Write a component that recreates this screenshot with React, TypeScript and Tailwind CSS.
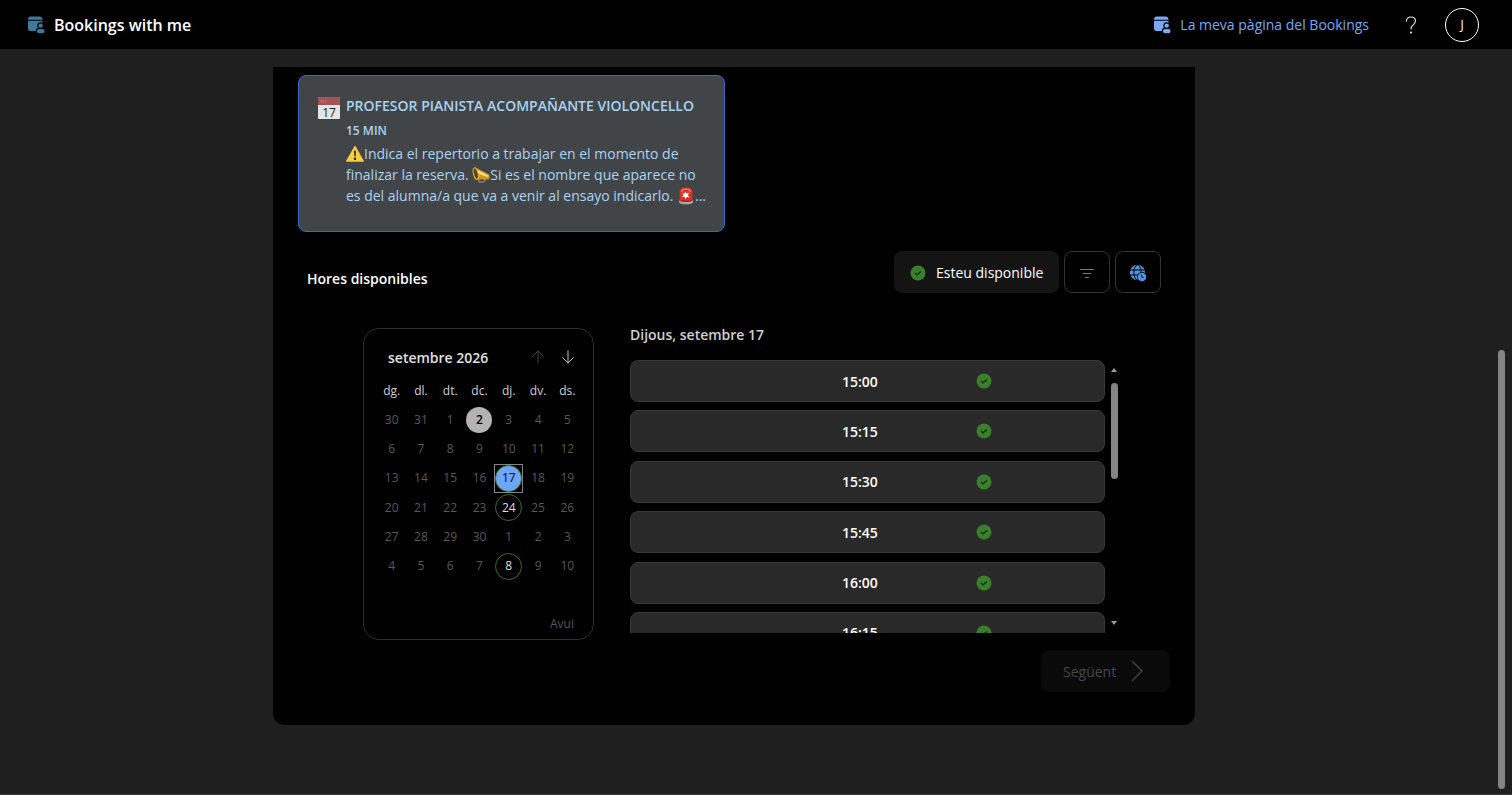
import React from "react";

function BookingsIcon({ className }: { className: string }) {
  return (
    <svg viewBox="0 0 18 18" className={className} fill="currentColor" aria-hidden="true">
      <path d="M1 3.400C1 1.800 2 .5 3.400.5h9.200C14.200.5 15.500 1.800 15.500 3.400v.3H1z" />
      <path d="M1 4.700h14.500V10l-5 5H3.400C1.900 15 1 14 1 12.600z" />
      <circle cx="13.700" cy="9.600" r="2.400" stroke="#000" strokeWidth="2" />
      <rect x="9.800" y="12.800" width="7.900" height="4.700" rx="2.200" stroke="#000" strokeWidth="2" />
      <circle cx="13.700" cy="9.600" r="2.200" />
      <rect x="10" y="13" width="7.500" height="4.300" rx="2" />
    </svg>
  );
}

function CheckBadge({ className }: { className: string }) {
  return (
    <svg viewBox="0 0 16 16" className={className} aria-hidden="true">
      <circle cx="8" cy="8" r="7.500" fill="#3a802a" />
      <path d="M5.400 8.300l1.800 1.600 3.400-3.200" fill="none" stroke="#0d2608" strokeWidth="1.300" strokeLinecap="round" strokeLinejoin="round" />
    </svg>
  );
}

function FilterIcon() {
  return (
    <svg viewBox="0 0 16 12" className="h-3 w-4" fill="none" stroke="#3f86d6" strokeWidth="1.200" strokeLinecap="round" aria-hidden="true">
      <path d="M1.500 2.500h13M4 6.500h8M6.500 10.500h3" />
    </svg>
  );
}

function GlobeClockIcon() {
  return (
    <svg viewBox="0 0 18 18" className="h-[18px] w-[18px]" aria-hidden="true">
      <circle cx="8.500" cy="8.500" r="7.700" fill="#4f93e0" />
      <g fill="none" stroke="#000" strokeWidth="1">
        <ellipse cx="8.500" cy="8.500" rx="3.600" ry="7.700" />
        <path d="M.5 6h16M.5 11h16" />
      </g>
      <circle cx="13" cy="13" r="5" fill="#000" />
      <circle cx="13" cy="13" r="4.300" fill="#4f93e0" />
      <path d="M12.700 10.700v2.500h1.800" fill="none" stroke="#000" strokeWidth="0.900" />
    </svg>
  );
}

function EventIcon() {
  return (
    <svg viewBox="0 0 22 22" className="mt-px h-[22px] w-[22px] shrink-0" aria-hidden="true">
      <rect width="22" height="22" rx="1" fill="#e4e4e4" />
      <path d="M1 0h20a1 1 0 0 1 1 1v7H0V1a1 1 0 0 1 1-1z" fill="#a05554" />
      <path d="M3 3v2M5 3v2h1M8 3v2" stroke="#c98886" strokeWidth="0.800" fill="none" />
      <text x="11" y="19.500" textAnchor="middle" fontSize="12" fontFamily="Open Sans, sans-serif" fill="#222">17</text>
    </svg>
  );
}

function WarningIcon() {
  return (
    <svg viewBox="0 0 18 18" className="inline-block h-[18px] w-[18px] align-[-4px]" role="img" aria-label="Atenció">
      <path d="M9 1.700L17.200 16H.8z" fill="#f9cf3a" stroke="#f9cf3a" strokeWidth="1.400" strokeLinejoin="round" />
      <path d="M8 5.800h2L9.600 11.500H8.400z" fill="#222" />
      <circle cx="9" cy="13.700" r="1.200" fill="#222" />
    </svg>
  );
}

function HornIcon() {
  return (
    <svg viewBox="0 0 18 18" className="inline-block h-[18px] w-[18px] align-[-4px]" role="img" aria-label="Avís">
      <path d="M6 11l1 4.500c2 1 4.500.5 6-1L12.500 11" fill="none" stroke="#8a806a" strokeWidth="1.500" />
      <path d="M3.500 1.500L17 8.500c1.200 1.500.8 4.500-.8 5L3.500 13.500C1.500 12 .3 3.500 3.500 1.500z" fill="#c9981f" />
      <path d="M5 3.500l11.500 6-.5 1.800L5.500 7.500z" fill="#f7dc7c" />
      <ellipse cx="3.800" cy="7.500" rx="2.300" ry="5.800" transform="rotate(-14 3.800 7.500)" fill="#5f4710" stroke="#e9bd3f" strokeWidth="1" />
    </svg>
  );
}

function SirenIcon() {
  return (
    <svg viewBox="0 0 18 18" className="inline-block h-[18px] w-[18px] align-[-4px]" role="img" aria-label="Alerta">
      <path d="M2.500 14V5c0-3 2-4.500 6.500-4.500S15.500 2 15.500 5v9z" fill="#da3127" />
      <path d="M4.500 5C5 2.500 6.500 2 9 2s4 .5 4.500 3" fill="none" stroke="#f58b7c" strokeWidth="1.200" />
      <path d="M8.500 4l1 2.500 3-.8-1.700 2.500 1.800 2.300-2.900-.5-1.200 2.500-.9-2.700-2.800.2 2-2-1.500-2.300 2.600.8z" fill="#fff" />
      <path d="M2 13.500c2 1.400 12 1.400 14 0v2c-2 2.600-12 2.600-14 0z" fill="#a9aaa8" />
      <path d="M3.500 13.300c2 1.200 9 1.200 11 0" fill="none" stroke="#b91c1c" strokeWidth="1.400" />
    </svg>
  );
}

function Arrow({ down }: { down?: boolean }) {
  return (
    <svg viewBox="0 0 14 14" className="h-[14px] w-[14px]" fill="none" stroke="currentColor" strokeWidth="1" strokeLinecap="round" strokeLinejoin="round" aria-hidden="true">
      {down ? <path d="M7 1v12M1.500 7.500L7 13l5.500-5.500" /> : <path d="M7 13V1M1.500 6.500L7 1l5.500 5.500" />}
    </svg>
  );
}

const weekdays = ["dg.", "dl.", "dt.", "dc.", "dj.", "dv.", "ds."];
const days = [
  30, 31, 1, 2, 3, 4, 5,
  6, 7, 8, 9, 10, 11, 12,
  13, 14, 15, 16, 17, 18, 19,
  20, 21, 22, 23, 24, 25, 26,
  27, 28, 29, 30, 1, 2, 3,
  4, 5, 6, 7, 8, 9, 10,
];
const TODAY = 3;
const SELECTED = 18;
const AVAILABLE = [25, 39];
const times = ["15:00", "15:15", "15:30", "15:45", "16:00", "16:15"];

function Day({ index, day }: { index: number; day: number }) {
  if (index === TODAY) {
    return <button className="flex size-[26px] items-center justify-center rounded-full bg-[#b3b3b3] font-semibold text-black">{day}</button>;
  }
  if (index === SELECTED) {
    return (
      <button aria-pressed="true" className="flex size-[29px] shrink-0 items-center justify-center border border-[#858585] text-black">
        <span className="flex size-[27px] items-center justify-center rounded-full border border-[#3a7d2c] bg-[#6ea6fb]">{day}</span>
      </button>
    );
  }
  if (AVAILABLE.includes(index)) {
    return <button className="flex size-[27px] items-center justify-center rounded-full border border-[#35761f] text-[#dedede]">{day}</button>;
  }
  return <button disabled className="text-[#595959]">{day}</button>;
}

function Calendar() {
  return (
    <section aria-label="Calendari" className="mt-[3px] flex h-[312px] w-[231px] shrink-0 flex-col rounded-2xl border border-[#2e2e2e] pt-4 pr-[11px] pb-[5px] pl-[13px]">
      <div className="flex h-6 items-center pr-[7px] pl-[11px]">
        <h3 className="flex-1 text-[14px] font-semibold text-[#e0e0e0]">setembre 2026</h3>
        <div className="flex gap-4">
          <button disabled aria-label="Mes anterior" className="text-[#444]"><Arrow /></button>
          <button aria-label="Mes següent" className="text-[#c4c4c4]"><Arrow down /></button>
        </div>
      </div>
      <div className="mt-3 grid grid-cols-7 text-center text-[12px] leading-5 text-[#d0d0d0]">
        {weekdays.map((d) => <span key={d}>{d}</span>)}
      </div>
      <div className="mt-1 grid h-[176px] grid-cols-7 grid-rows-6 text-[12px]">
        {days.map((d, i) => (
          <div key={i} className="flex min-h-0 items-center justify-center"><Day index={i} day={d} /></div>
        ))}
      </div>
      <button disabled className="mt-auto mr-2 self-end text-[12px] leading-5 text-[#595959]">Avui</button>
    </section>
  );
}

function TimeSlots() {
  return (
    <section className="min-w-0 flex-1">
      <h3 className="text-[14px] leading-5 font-semibold text-[#d0d0d0]">Dijous, setembre 17</h3>
      <div className="mt-[15px] flex gap-[5px]">
        <div className="h-[273px] min-w-0 flex-1 overflow-hidden">
          <div className="flex h-[294px] flex-col justify-between">
            {times.map((t) => (
              <button key={t} className="flex h-[42px] shrink-0 items-center rounded-lg border border-[#383838] bg-[#292929] pl-[211px] text-[14px] font-semibold text-white">
                <span className="flex-1 text-left">{t}</span>
                <CheckBadge className="mr-[112px] size-4" />
              </button>
            ))}
          </div>
        </div>
        <div aria-hidden="true" className="flex w-2 flex-col items-center pt-2 pb-2">
          <svg viewBox="0 0 8 4" className="h-1 w-2"><path d="M1 4l3-4 3 4z" fill="#9b9b9b" /></svg>
          <div className="mt-[11px] h-24 w-[7px] rounded-full bg-[#858585]" />
          <svg viewBox="0 0 8 4" className="mt-auto h-1 w-2"><path d="M1 0l3 4 3-4z" fill="#9b9b9b" /></svg>
        </div>
      </div>
    </section>
  );
}

export default function App() {
  return (
    <div className="flex min-h-screen flex-col border-b border-[#3a3a3a] bg-[#1f1f1f] font-['Open_Sans','Noto_Sans',sans-serif] text-white">
      <header className="flex h-[49px] items-center bg-black pr-[33px] pl-[27px]">
        <BookingsIcon className="size-[18px] text-[#3c7a9c]" />
        <h1 className="ml-[9px] text-[16px] font-semibold">Bookings with me</h1>
        <a href="#bookings" className="ml-auto flex items-center gap-[9px] text-[14px] text-[#77a9f8]">
          <BookingsIcon className="size-[18px]" />
          La meva pàgina del Bookings
        </a>
        <button aria-label="Ajuda" className="ml-8 flex w-5 justify-center">
          <svg viewBox="0 0 12 18" className="h-[18px] w-3" fill="none" stroke="#e8e8e8" strokeWidth="1.100" strokeLinecap="round" aria-hidden="true">
            <path d="M1.500 5.200C1.500 2.500 3.200 1 6 1s4.500 1.600 4.500 4.100C10.500 8.600 6 8.700 6 13" />
            <circle cx="6" cy="16.500" r="0.500" fill="#e8e8e8" />
          </svg>
        </button>
        <button className="ml-6 flex size-[34px] items-center justify-center rounded-full border border-white text-[12px]">J</button>
      </header>

      <div className="flex flex-1">
        <main className="flex flex-1 justify-center pt-[18px] pr-[30px] pb-[69px]">
          <div className="w-full max-w-[922px] self-start rounded-b-xl bg-black pt-2 pr-[25px] pb-[33px] pl-[25px]">
            <article className="flex h-[157px] w-[427px] gap-[6px] rounded-lg border border-[#3a66c4] bg-[#424547] py-5 pr-[18px] pl-[19px] text-[#a9d3f2]">
              <EventIcon />
              <div className="min-w-0">
                <h2 className="text-[14px] leading-5 font-semibold whitespace-nowrap">PROFESOR PIANISTA ACOMPAÑANTE VIOLONCELLO</h2>
                <p className="mt-[3px] text-[12px] leading-6 font-semibold">15 MIN</p>
                <p className="text-[14px] leading-[21px] whitespace-nowrap">
                  <WarningIcon />Indica el repertorio a trabajar en el momento de<br />
                  finalizar la reserva. <HornIcon />Si es el nombre que aparece no<br />
                  es del alumna/a que va a venir al ensayo indicarlo. <SirenIcon />...
                </p>
              </div>
            </article>

            <div className="mt-[19px] flex items-start pr-[9px] pl-[9px]">
              <h2 className="mt-[18px] flex-1 text-[14px] leading-5 font-semibold">Hores disponibles</h2>
              <div className="flex gap-[5px]">
                <div className="flex h-[42px] w-[165px] items-center gap-[10px] rounded-lg bg-[#141414] pt-px pl-4 text-[14px]">
                  <CheckBadge className="size-4" />
                  Esteu disponible
                </div>
                <button aria-label="Filtra" className="flex h-[42px] w-[46px] items-center justify-center rounded-lg border border-[#333] pt-[2px]"><FilterIcon /></button>
                <button aria-label="Fus horari" className="flex h-[42px] w-[46px] items-center justify-center rounded-lg border border-[#333] pt-[2px]"><GlobeClockIcon /></button>
              </div>
            </div>

            <div className="mt-8 flex gap-9 pr-[52px] pl-[65px]">
              <Calendar />
              <TimeSlots />
            </div>

            <div className="mt-[10px] flex justify-end">
              <button disabled className="flex h-[42px] w-[129px] items-center gap-[14px] rounded-lg bg-[#0a0a0a] pl-[22px] text-[14px] text-[#474747]">
                Següent
                <svg viewBox="0 0 14 22" className="h-[22px] w-[14px]" fill="none" stroke="currentColor" strokeWidth="1.200" aria-hidden="true">
                  <path d="M2 1l10 10L2 21" />
                </svg>
              </button>
            </div>
          </div>
        </main>
        <div aria-hidden="true" className="w-[14px] pt-[301px]">
          <div className="h-[439px] w-[7px] rounded-full bg-[#858585]" />
        </div>
      </div>
    </div>
  );
}
